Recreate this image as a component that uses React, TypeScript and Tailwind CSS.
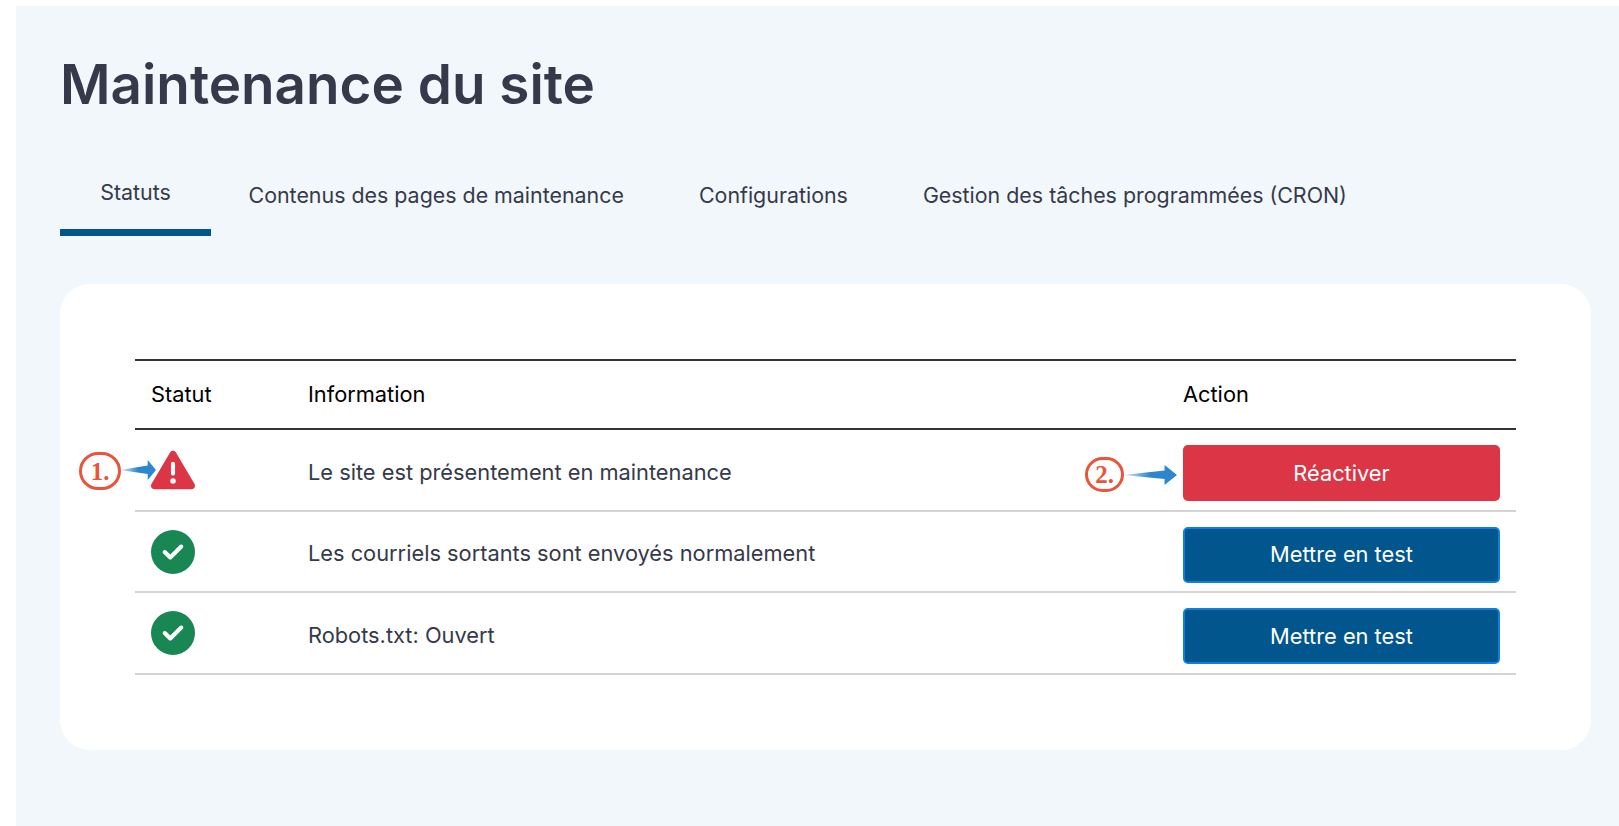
import React from 'react';
import { FaCircleCheck, FaTriangleExclamation } from 'react-icons/fa6';

const tabs = [
  'Contenus des pages de maintenance',
  'Configurations',
  'Gestion des tâches programmées (CRON)',
];

const Arrow = ({ id, className }: { id: string; className: string }) => (
  <svg viewBox="0 0 52 20" preserveAspectRatio="none" className={className}>
    <defs>
      <linearGradient id={id} x1="0" x2="1" y1="0" y2="0">
        <stop offset="0" stopColor="#2e86d0" stopOpacity="0.15" />
        <stop offset="0.5" stopColor="#2e86d0" />
      </linearGradient>
    </defs>
    <path d="M0 10 L40 5.5 L40 0 L52 10 L40 20 L40 14 Z" fill={`url(#${id})`} />
  </svg>
);

const Marker = ({ label, className }: { label: string; className: string }) => (
  <div
    className={`absolute flex items-center justify-center rounded-full border-[3px] border-[#e8553a] bg-white font-['Liberation_Serif',serif] text-[25px] leading-none font-bold text-[#e8553a] ${className}`}
  >
    {label}
  </div>
);

const Row = ({
  icon,
  text,
  action,
  red,
}: {
  icon: React.ReactNode;
  text: string;
  action: string;
  red?: boolean;
}) => (
  <div className="flex h-[81.7px] items-center border-b-2 border-[#d4d4d4]">
    <div className="flex w-[173px] pl-4">{icon}</div>
    <div className="mt-[4px] w-[875px] text-[#353a4b]">{text}</div>
    <button
      className={
        red
          ? 'mt-[6px] h-[56px] w-[317px] rounded-[5px] bg-[#dc3545] text-white'
          : 'mt-[6px] h-[56px] w-[317px] rounded-[5px] border-2 border-[#0b80dc] bg-[#00568d] text-white'
      }
    >
      {action}
    </button>
  </div>
);

export default function App() {
  return (
    <div className="h-[826px] overflow-hidden bg-white pt-[6px] pl-4 font-['Inter',sans-serif]">
      <div className="h-[820px] bg-[#f2f7fb] pt-[46px] pl-[44px]">
        <h1 className="h-[64px] text-[54.8px] leading-[64px] font-semibold text-[#353a4b]">
          Maintenance du site
        </h1>

        <div className="mt-[45px] flex text-[21.4px] text-[#353a4b]">
          <div className="h-[75px] w-[151px] border-b-[7px] border-[#00568d] pt-[15px] text-center">
            Statuts
          </div>
          {tabs.map((tab) => (
            <div key={tab} className="px-[37.5px] pt-[18px]">
              {tab}
            </div>
          ))}
        </div>

        <div className="relative mt-[48px] h-[466px] w-[1531px] rounded-[30px] bg-white pt-[75px] pl-[75px] text-[21.8px]">
          <div className="w-[1381px]">
            <div className="flex h-[71px] items-center border-y-2 border-[#333333] text-black">
              <div className="w-[173px] pl-4">Statut</div>
              <div className="w-[875px]">Information</div>
              <div>Action</div>
            </div>
            <Row
              icon={<FaTriangleExclamation className="h-[44px] w-[44px] text-[#dc3545]" />}
              text="Le site est présentement en maintenance"
              action="Réactiver"
              red
            />
            <Row
              icon={<FaCircleCheck className="h-[44px] w-[44px] text-[#198754]" />}
              text="Les courriels sortants sont envoyés normalement"
              action="Mettre en test"
            />
            <Row
              icon={<FaCircleCheck className="h-[44px] w-[44px] text-[#198754]" />}
              text="Robots.txt: Ouvert"
              action="Mettre en test"
            />
          </div>

          <Marker label="1." className="top-[168px] left-[19px] h-[38px] w-[42px]" />
          <Arrow id="arrow-one" className="absolute top-[176px] left-[60px] h-[20px] w-[36px]" />
          <Marker label="2." className="top-[173px] left-[1025px] h-[35px] w-[39px]" />
          <Arrow id="arrow-two" className="absolute top-[181px] left-[1063px] h-[20px] w-[54px]" />
        </div>
      </div>
    </div>
  );
}
